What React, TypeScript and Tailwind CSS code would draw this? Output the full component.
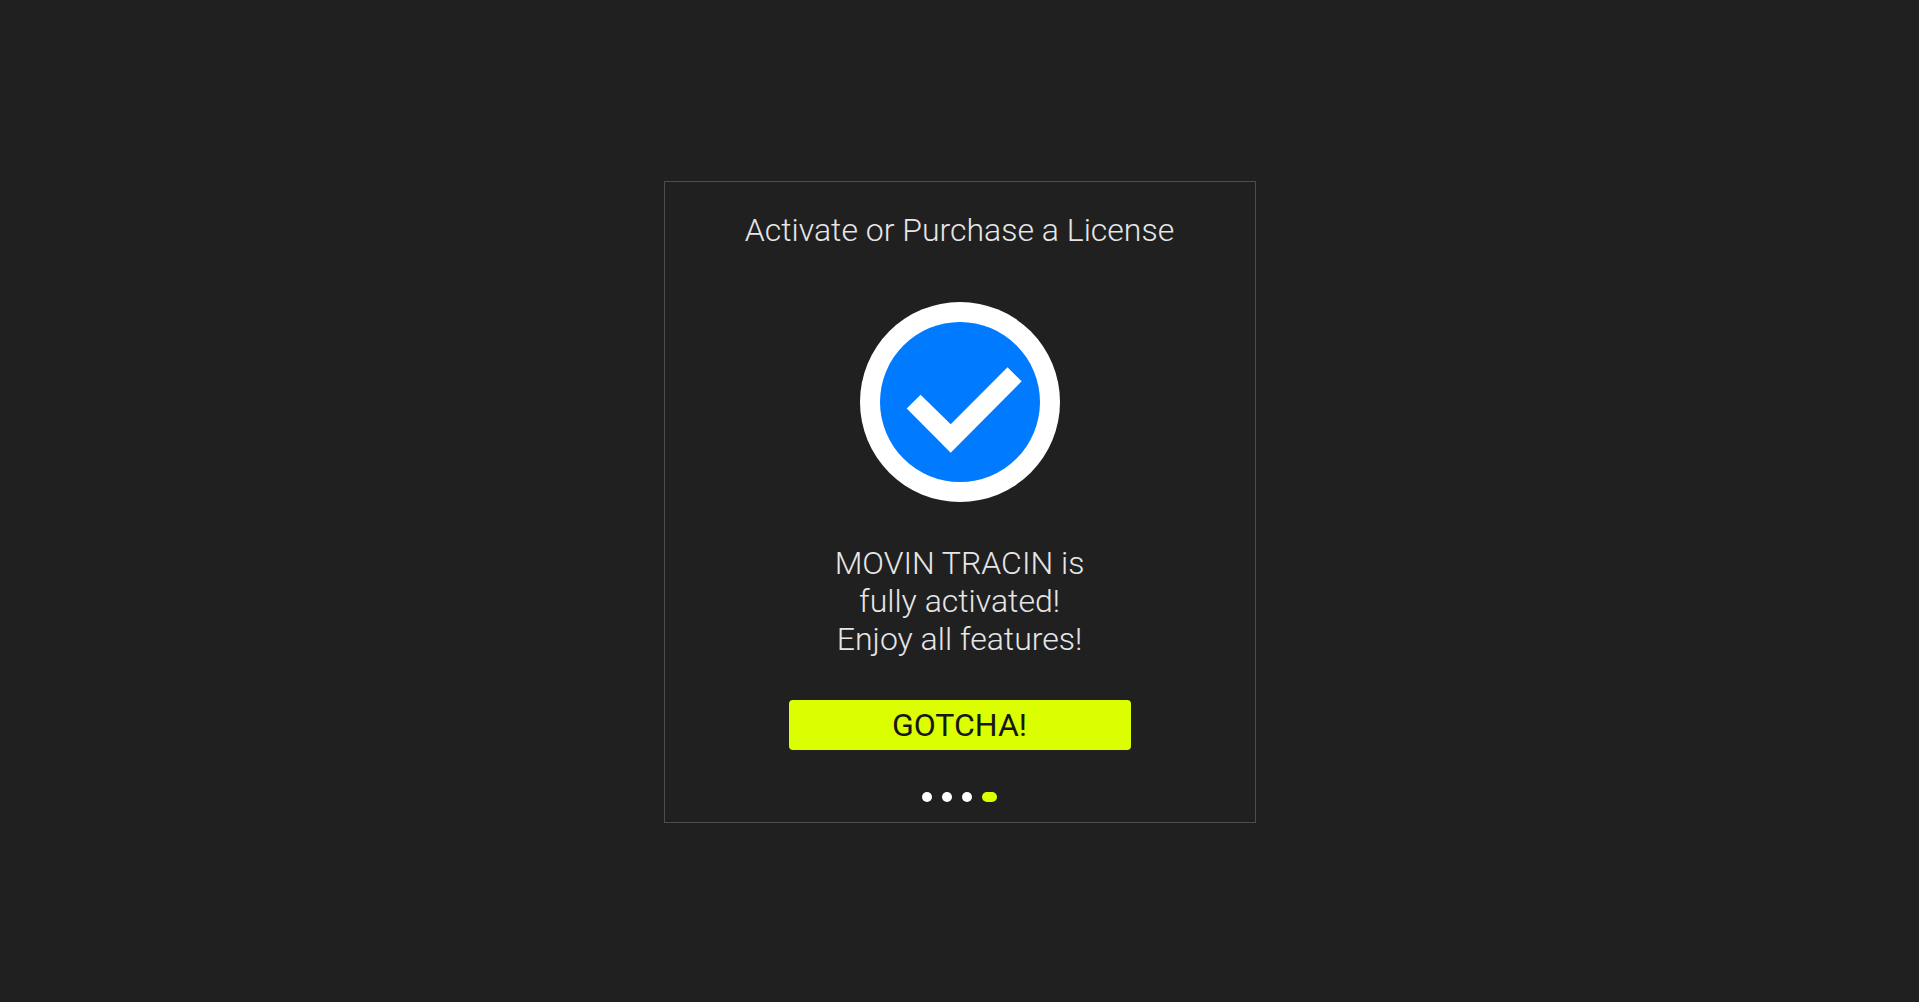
const message = ['MOVIN TRACIN is', 'fully activated!', 'Enjoy all features!']

const steps = ['Start', 'License', 'Key', 'Done']

function CheckBadge() {
  return (
    <svg viewBox="0 0 200 200" className="mt-[53px] size-[200px]" role="img" aria-label="Activated">
      <circle cx="100" cy="100" r="100" fill="#ffffff" />
      <circle cx="100" cy="100" r="80" fill="#007aff" />
      <path d="M46.7 106.5 60.6 92.7 90.7 122.3 147.5 65.3 161.7 79.3 90.7 150.7Z" fill="#ffffff" />
    </svg>
  )
}

export default function App() {
  return (
    <main className="flex min-h-screen w-full items-center justify-center bg-[#202020] px-4 pt-0.5 font-['Roboto',sans-serif] text-[#e6e6e6]">
      <section className="flex w-full max-w-[592px] flex-col items-center border border-[#4d4d4d] px-4 pt-[29px] pb-5">
        <h1 className="text-center text-[32px] leading-[38px] font-light">Activate or Purchase a License</h1>
        <CheckBadge />
        <p className="mt-[42px] text-center text-[32px] leading-[38px] font-light">
          {message.map((line) => (
            <span key={line} className="block">
              {line}
            </span>
          ))}
        </p>
        <button
          type="button"
          className="mt-[42px] h-[50px] w-full max-w-[342px] rounded bg-[#dbff00] text-[32px] leading-[38px] font-normal text-[#171717]"
        >
          GOTCHA!
        </button>
        <ol className="mt-[42px] flex gap-2.5">
          {steps.map((step, i) => (
            <li
              key={step}
              aria-label={step}
              className={i === steps.length - 1 ? 'h-2.5 w-[15px] rounded-full bg-[#dbff00]' : 'size-2.5 rounded-full bg-white'}
            />
          ))}
        </ol>
      </section>
    </main>
  )
}
